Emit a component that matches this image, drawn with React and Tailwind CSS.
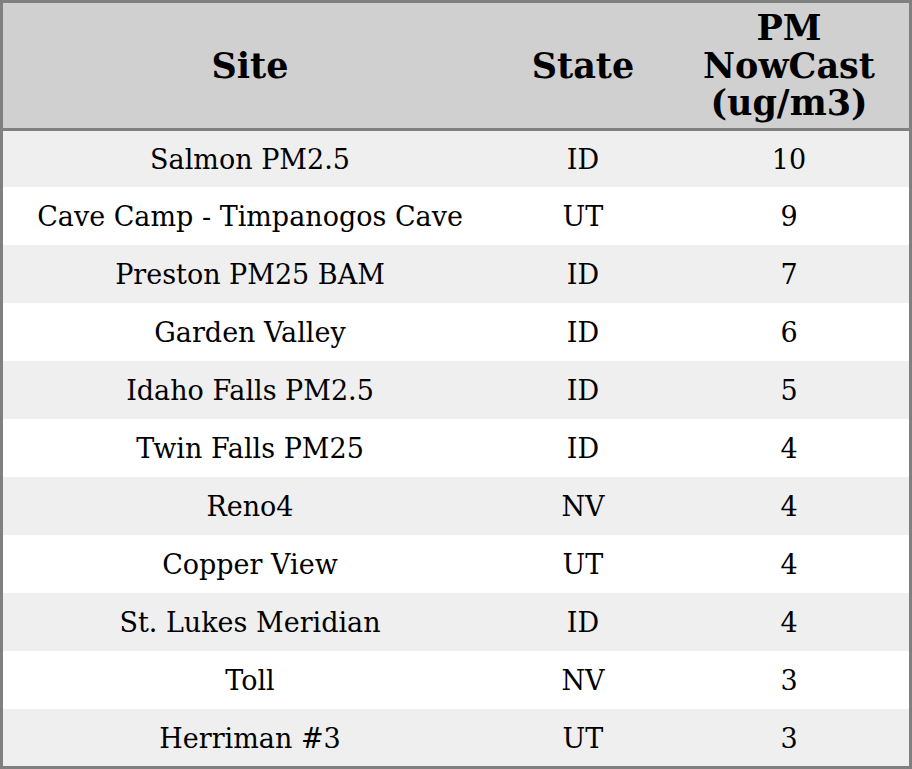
export default function App() {
  const rows = [
    ["Salmon PM2.5", "ID", "10"],
    ["Cave Camp - Timpanogos Cave", "UT", "9"],
    ["Preston PM25 BAM", "ID", "7"],
    ["Garden Valley", "ID", "6"],
    ["Idaho Falls PM2.5", "ID", "5"],
    ["Twin Falls PM25", "ID", "4"],
    ["Reno4", "NV", "4"],
    ["Copper View", "UT", "4"],
    ["St. Lukes Meridian", "ID", "4"],
    ["Toll", "NV", "3"],
    ["Herriman #3", "UT", "3"],
  ];
  return (
    <div
      className="w-[912px] h-[769px] border-[3px] border-[#808080] bg-white text-black flex flex-col"
      style={{ fontFamily: '"DejaVu Serif", serif' }}
    >
      <div className="h-[125px] shrink-0 bg-[#d0d0d0] flex items-center font-bold text-[35px] leading-[37.5px] border-b-[3px] border-[#808080] box-content">
        <div className="w-[494px] text-center">Site</div>
        <div className="w-[172px] text-center">State</div>
        <div className="w-[240px] text-center">PM<br />NowCast<br />(ug/m3)</div>
      </div>
      <div className="flex-1 flex flex-col">
        {rows.map((r, i) => (
          <div
            key={i}
            className={`shrink-0 flex items-center pt-[2px] text-[27px] leading-[32px] ${
              i === 0 ? "h-[56px]" : i === rows.length - 1 ? "h-[57px]" : "h-[58px]"
            } ${i % 2 === 0 ? "bg-[#efefef]" : "bg-white"}`}
          >
            <div className="w-[494px] text-center">{r[0]}</div>
            <div className="w-[172px] text-center">{r[1]}</div>
            <div className="w-[240px] text-center">{r[2]}</div>
          </div>
        ))}
      </div>
    </div>
  );
}
